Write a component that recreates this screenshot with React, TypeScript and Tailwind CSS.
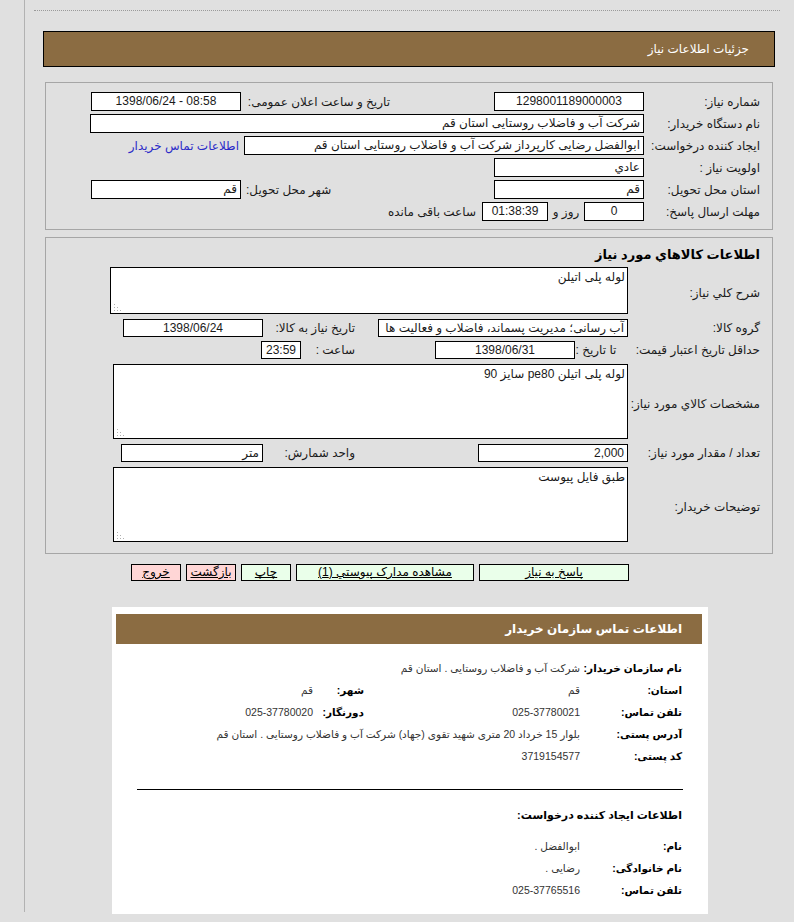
import React from "react";

function Field({ className = "", children }: { className?: string; children?: React.ReactNode }) {
  return (
    <div
      className={`h-[19px] shrink-0 border border-black bg-white px-[3px] leading-[17px] whitespace-nowrap overflow-hidden ${className}`}
    >
      {children}
    </div>
  );
}

function Grip() {
  return (
    <svg className="absolute left-[2px] bottom-[2px]" width="10" height="10" viewBox="0 0 10 10">
      <rect x="1" y="3" width="1" height="1" fill="#b0b0b0" />
      <rect x="1" y="6" width="1" height="1" fill="#b0b0b0" />
      <rect x="1" y="9" width="1" height="1" fill="#b0b0b0" />
      <rect x="4" y="6" width="1" height="1" fill="#b0b0b0" />
      <rect x="4" y="9" width="1" height="1" fill="#b0b0b0" />
      <rect x="7" y="9" width="1" height="1" fill="#b0b0b0" />
    </svg>
  );
}

function Area({ className = "", children }: { className?: string; children?: React.ReactNode }) {
  return (
    <div className={`relative shrink-0 border border-black bg-white px-[2px] pt-[1px] leading-[17px] ${className}`}>
      {children}
      <Grip />
    </div>
  );
}

function InfoRow({
  label,
  value,
  label2,
  value2,
  wide,
}: {
  label: string;
  value: string;
  label2?: string;
  value2?: string;
  wide?: boolean;
}) {
  return (
    <div className="flex h-[22px] items-center">
      <div className="w-[102px] shrink-0 whitespace-nowrap font-bold text-[10.5px] text-black">{label}</div>
      <div
        className={`${wide ? "w-[400px]" : "w-[216px]"} shrink-0 whitespace-nowrap text-[10.5px] text-[#333]`}
      >
        {value}
      </div>
      {label2 !== undefined && (
        <>
          <div className="w-[51px] shrink-0 whitespace-nowrap font-bold text-[10.5px] text-black">{label2}</div>
          <div className="whitespace-nowrap text-[10.5px] text-[#333]">{value2}</div>
        </>
      )}
    </div>
  );
}

export default function App() {
  return (
    <div className="h-[922px] w-[794px] overflow-hidden bg-[#e0e0e0] pl-[24px] font-['Liberation_Sans','DejaVu_Sans',sans-serif] text-[12px] text-[#1a1a1a]">
      <div dir="rtl" className="h-[912px] border-l border-[#b2b2b2] pt-[10px]">
        {/* dotted line */}
        <div className="mr-[14px] w-[746px] border-t border-dotted border-[#9a9a9a]" />

        {/* header */}
        <div className="mr-[19px] mt-[20px] flex h-[36px] w-[732px] items-center border border-black bg-[#8b6c42] pr-[25px] text-[12px] text-white">
          جزئیات اطلاعات نیاز
        </div>

        {/* panel 1 */}
        <div className="mr-[21px] mt-[15px] h-[148px] w-[728px] border border-[#a6a6a6] pr-[12px] pt-[9px]">
          <div className="mb-[3px] flex h-[19px] items-center">
            <div className="w-[116px] shrink-0">شماره نیاز:</div>
            <Field className="w-[150px] text-center">1298001189000003</Field>
            <div className="w-[253px] shrink-0 pr-[104px] whitespace-nowrap">تاریخ و ساعت اعلان عمومی:</div>
            <Field className="w-[150px] text-center">
              <span dir="ltr">1398/06/24 - 08:58</span>
            </Field>
          </div>
          <div className="mb-[3px] flex h-[19px] items-center">
            <div className="w-[116px] shrink-0">نام دستگاه خریدار:</div>
            <Field className="w-[554px] text-right">شرکت آب و فاضلاب روستایی استان قم</Field>
          </div>
          <div className="mb-[3px] flex h-[19px] items-center">
            <div className="w-[116px] shrink-0">ایجاد کننده درخواست:</div>
            <Field className="w-[400px] text-right">
              ابوالفضل رضایی کارپرداز شرکت آب و فاضلاب روستایی استان قم
            </Field>
            <div className="mr-[5px] whitespace-nowrap text-[#2b2bc8]">اطلاعات تماس خریدار</div>
          </div>
          <div className="mb-[3px] flex h-[19px] items-center">
            <div className="w-[116px] shrink-0">اولویت نیاز :</div>
            <Field className="w-[150px] text-right">عادي</Field>
          </div>
          <div className="mb-[3px] flex h-[19px] items-center">
            <div className="w-[116px] shrink-0">استان محل تحویل:</div>
            <Field className="w-[150px] text-right">قم</Field>
            <div className="w-[253px] shrink-0 pl-[5px] text-left">شهر محل تحویل:</div>
            <Field className="w-[150px] text-right">قم</Field>
          </div>
          <div className="flex h-[19px] items-center">
            <div className="w-[116px] shrink-0">مهلت ارسال پاسخ:</div>
            <Field className="w-[60px] text-center">0</Field>
            <div className="w-[36px] shrink-0 whitespace-nowrap text-center">روز و</div>
            <Field className="w-[66px] text-center">01:38:39</Field>
            <div className="mr-[6px] whitespace-nowrap">ساعت باقی مانده</div>
          </div>
        </div>

        {/* panel 2 */}
        <div className="mr-[21px] mt-[7px] h-[317px] w-[728px] border border-[#a6a6a6] pr-[12px] pt-[8px]">
          <div className="h-[18px] text-[13px] font-bold leading-[18px] text-black">اطلاعات کالاهاي مورد نیاز</div>

          <div className="mt-[3px] flex items-center">
            <div className="w-[132px] shrink-0 pt-[4px]">شرح کلي نیاز:</div>
            <Area className="h-[47px] w-[518px]">لوله پلی اتیلن</Area>
          </div>

          <div className="mt-[5px] flex h-[18px] items-center">
            <div className="w-[132px] shrink-0">گروه کالا:</div>
            <Field className="!h-[18px] w-[250px] text-right !leading-[16px]">
              آب رسانی؛ مدیریت پسماند، فاضلاب و فعالیت ها
            </Field>
            <div className="mr-[23px] w-[92px] shrink-0 whitespace-nowrap">تاریخ نیاز به کالا:</div>
            <Field className="!h-[18px] w-[140px] text-center !leading-[16px]">1398/06/24</Field>
          </div>

          <div className="mt-[4px] flex h-[18px] items-center">
            <div className="w-[143px] shrink-0 whitespace-nowrap">حداقل تاریخ اعتبار قیمت:</div>
            <div className="w-[42px] shrink-0 whitespace-nowrap text-center">تا تاریخ :</div>
            <Field className="!h-[18px] w-[140px] text-center !leading-[16px]">1398/06/31</Field>
            <div className="mr-[80px] w-[54px] shrink-0 whitespace-nowrap">ساعت :</div>
            <Field className="!h-[18px] w-[40px] text-center !leading-[16px]">23:59</Field>
          </div>

          <div className="mt-[5px] flex items-center">
            <div className="w-[132px] shrink-0 pt-[4px]">مشخصات کالاي مورد نیاز:</div>
            <Area className="h-[75px] w-[515px]">لوله پلی اتیلن pe80 سایز 90</Area>
          </div>

          <div className="mt-[5px] flex h-[18px] items-center">
            <div className="w-[132px] shrink-0">تعداد / مقدار مورد نیاز:</div>
            <Field className="!h-[18px] w-[150px] text-right !leading-[16px]">2,000</Field>
            <div className="mr-[123px] w-[92px] shrink-0 whitespace-nowrap">واحد شمارش:</div>
            <Field className="!h-[18px] w-[142px] text-right !leading-[16px]">متر</Field>
          </div>

          <div className="mt-[5px] flex items-center">
            <div className="w-[132px] shrink-0 pt-[4px]">توضیحات خریدار:</div>
            <Area className="h-[75px] w-[515px]">طبق فایل پیوست</Area>
          </div>
        </div>

        {/* buttons */}
        <div className="mt-[10px] flex h-[17px] gap-[5px] pr-[165px] text-black">
          <div className="h-[17px] w-[150px] border border-black bg-[#eaffea] text-center leading-[15px] underline">
            پاسخ به نیاز
          </div>
          <div className="h-[17px] w-[178px] border border-black bg-[#eaffea] text-center leading-[15px] underline">
            مشاهده مدارک پیوستي (1)
          </div>
          <div className="h-[17px] w-[50px] border border-black bg-[#eaffea] text-center leading-[15px] underline">
            چاپ
          </div>
          <div className="h-[17px] w-[50px] border border-black bg-[#ffd6d6] text-center leading-[15px] underline">
            بازگشت
          </div>
          <div className="h-[17px] w-[50px] border border-black bg-[#ffd6d6] text-center leading-[15px] underline">
            خروج
          </div>
        </div>

        {/* white panel */}
        <div className="mr-[86px] mt-[26px] h-[307px] w-[596px] bg-white pl-[4px] pr-[6px] pt-[7px]">
          <div className="flex h-[30px] items-center bg-[#8b6c42] pr-[20px] text-[12px] font-bold text-white">
            اطلاعات تماس سازمان خریدار
          </div>
          <div className="mt-[14px] pr-[20px]">
            <InfoRow label="نام سازمان خریدار:" value="شرکت آب و فاضلاب روستایی . استان قم" />
            <InfoRow label="استان:" value="قم" label2="شهر:" value2="قم" />
            <InfoRow label="تلفن تماس:" value="025-37780021" label2="دورنگار:" value2="025-37780020" />
            <InfoRow
              label="آدرس پستی:"
              value="بلوار 15 خرداد 20 متری شهید تقوی (جهاد) شرکت آب و فاضلاب روستایی . استان قم"
              wide
            />
            <InfoRow label="کد پستی:" value="3719154577" />
          </div>
          <div className="mr-[19px] mt-[21px] h-px w-[546px] bg-black" />
          <div className="mt-[17px] pr-[20px] text-[11px] font-bold text-black">اطلاعات ایجاد کننده درخواست:</div>
          <div className="mt-[12px] pr-[20px]">
            <InfoRow label="نام:" value="ابوالفضل ." />
            <InfoRow label="نام خانوادگی:" value="رضایی ." />
            <InfoRow label="تلفن تماس:" value="025-37765516" />
          </div>
        </div>
      </div>
    </div>
  );
}
